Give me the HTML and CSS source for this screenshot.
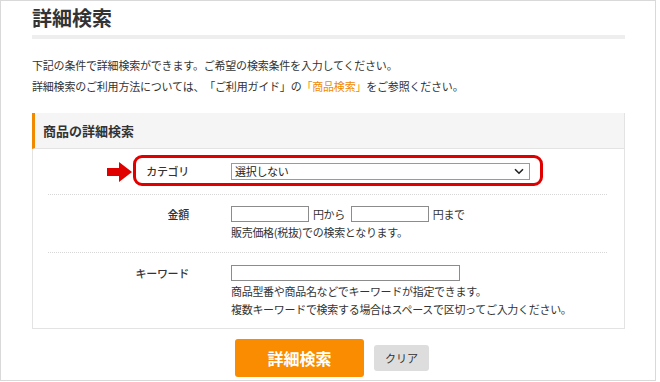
FILE: index.html
```html
<!DOCTYPE html>
<html lang="ja">
<head>
<meta charset="utf-8">
<title>詳細検索</title>
<link rel="stylesheet" href="styles.css">
</head>
<body>
<div class="frame">
  <div class="content">
    <h1 class="title">詳細検索</h1>
    <div class="rule"></div>
    <p class="intro">下記の条件で詳細検索ができます。ご希望の検索条件を入力してください。<br>詳細検索のご利用方法については、「ご利用ガイド」の<span class="link">「商品検索」</span>をご参照ください。</p>

    <section class="box">
      <h2 class="box-head">商品の詳細検索</h2>
      <div class="row row-cat">
        <div class="label">カテゴリ</div>
        <div class="value">
          <div class="field-line">
            <span class="select-wrap">
              <select class="select"><option>選択しない</option></select>
              <svg class="chev" width="10" height="7" viewBox="0 0 10 7"><path d="M1 1.2 L5 5.2 L9 1.2" fill="none" stroke="#222" stroke-width="1.6"/></svg>
            </span>
          </div>
        </div>
        <div class="highlight"></div>
        <svg class="arrow" width="26" height="20" viewBox="0 0 26 20"><polygon points="0,6 12,6 12,0 25,10 12,20 12,14 0,14" fill="#e00000"/></svg>
      </div>
      <div class="row row-price">
        <div class="label">金額</div>
        <div class="value">
          <div class="field-line">
            <input class="input input-price" type="text">
            <span class="unit">円から</span>
            <input class="input input-price" type="text">
            <span class="unit">円まで</span>
          </div>
          <div class="note">販売価格(税抜)での検索となります。</div>
        </div>
      </div>
      <div class="row row-key">
        <div class="label">キーワード</div>
        <div class="value">
          <div class="field-line">
            <input class="input input-key" type="text">
          </div>
          <div class="note">商品型番や商品名などでキーワードが指定できます。</div>
          <div class="note">複数キーワードで検索する場合はスペースで区切ってご入力ください。</div>
        </div>
      </div>
    </section>

    <div class="actions">
      <button class="btn-search" type="button">詳細検索</button>
      <button class="btn-clear" type="button">クリア</button>
    </div>
  </div>
</div>
</body>
</html>
```

FILE: styles.css
```css
* { box-sizing: border-box; }

html, body {
  margin: 0;
  padding: 0;
  background: #fff;
}

body {
  font-family: "Noto Sans CJK JP", "Noto Sans", sans-serif;
  color: #333;
  font-size: 11px;
  text-spacing-trim: space-all;
}

.frame {
  width: 656px;
  height: 381px;
  border: 1px solid #d9d9d9;
  overflow: hidden;
}

.content {
  padding: 3px 30px 0 31px;
}

.title {
  margin: 0;
  font-size: 20px;
  line-height: 28px;
  font-weight: 700;
  color: #333;
}

.rule {
  margin-top: 3px;
  height: 4px;
  background: #eeeeee;
}

.intro {
  margin: 16px 0 0;
  line-height: 21px;
  font-size: 11px;
  letter-spacing: -0.2px;
}

.link {
  color: #f08a00;
}

.box {
  margin-top: 16px;
  border: 1px solid #e3e3e3;
}

.box-head {
  margin: -1px 0 0 -1px;
  height: 36px;
  line-height: 36px;
  padding-left: 8px;
  background: #f5f5f5;
  border-left: 3px solid #f08a00;
  border-bottom: 1px solid #e3e3e3;
  font-size: 13px;
  font-weight: 700;
  color: #333;
}

.row {
  position: relative;
  display: grid;
  grid-template-columns: 141px 1fr;
  column-gap: 42px;
  margin: 0 17px 0 15px;
  border-bottom: 1px dotted #d6d6d6;
}

.row:last-child {
  border-bottom: none;
}

.row-cat {
  padding: 13px 0 13px;
}

.row-price {
  padding: 10px 0 11px;
}

.row-key {
  padding: 11px 0 10px;
}

.label {
  text-align: right;
  line-height: 18px;
  height: 18px;
  font-weight: 500;
  letter-spacing: -0.3px;
  color: #333;
}

.row-cat .label {
  line-height: 19px;
}

.value {
  display: flex;
  flex-direction: column;
}

.field-line {
  display: flex;
  align-items: center;
  gap: 4px;
  height: 18px;
}

.row-cat .field-line {
  height: 19px;
}

.select-wrap {
  position: relative;
  display: block;
  width: 299px;
  height: 17px;
}

.select {
  appearance: none;
  -webkit-appearance: none;
  width: 100%;
  height: 17px;
  margin: 0;
  padding: 0 0 0 3px;
  border: 1px solid #9a9a9a;
  border-radius: 0;
  background: #fff;
  font-family: inherit;
  font-size: 11px;
  line-height: 15px;
  color: #222;
  letter-spacing: -0.3px;
}

.chev {
  position: absolute;
  right: 6px;
  top: 5px;
}

.input {
  height: 16px;
  margin: 0;
  padding: 0 2px;
  border: 1px solid #8c8c8c;
  border-radius: 0;
  background: #fff;
  font-family: inherit;
  font-size: 11px;
}

.input-price {
  width: 78px;
}

.input-key {
  width: 229px;
}

.unit {
  margin-right: 2px;
  letter-spacing: -0.4px;
}

.note {
  line-height: 18px;
  letter-spacing: -0.3px;
}

.highlight {
  position: absolute;
  left: 85px;
  top: 6px;
  width: 410px;
  height: 31px;
  border: 3px solid #e00000;
  border-radius: 9px;
  pointer-events: none;
}

.arrow {
  position: absolute;
  left: 59px;
  top: 13px;
}

.actions {
  display: flex;
  align-items: center;
  gap: 10px;
  margin-top: 10px;
  padding-left: 203px;
}

.btn-search {
  width: 129px;
  height: 38px;
  border: none;
  border-radius: 3px;
  background: #f98c00;
  color: #fff;
  font-family: inherit;
  font-size: 16px;
  font-weight: 700;
  padding: 0;
}

.btn-clear {
  width: 55px;
  height: 26px;
  border: none;
  border-radius: 3px;
  background: #dddddd;
  color: #333;
  font-family: inherit;
  font-size: 11px;
  padding: 0;
}
```
